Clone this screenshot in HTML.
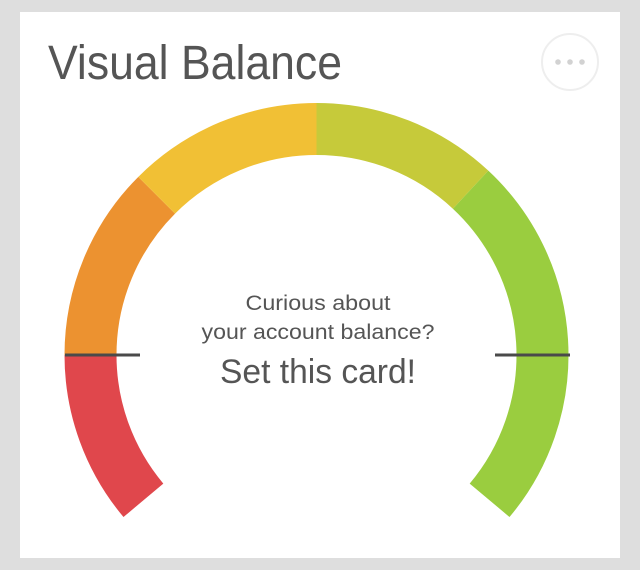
<!DOCTYPE html>
<html><head><meta charset="utf-8"><style>
html,body{margin:0;padding:0;background:#dedede;width:640px;height:570px;overflow:hidden}
svg{display:block}
</style></head><body>
<svg width="640" height="570" viewBox="0 0 640 570" xmlns="http://www.w3.org/2000/svg">
<rect x="0" y="0" width="640" height="570" fill="#dedede"/>
<rect x="20" y="12" width="600" height="546" fill="#ffffff"/>
<text x="48" y="79" font-family="Liberation Sans, sans-serif" font-size="48" fill="#555" stroke="#fff" stroke-width="1.8" paint-order="stroke" textLength="294" lengthAdjust="spacingAndGlyphs" style="paint-order:stroke">Visual Balance</text>
<circle cx="570" cy="62" r="28" fill="#fff" stroke="#eeeeee" stroke-width="2"/>
<circle cx="558" cy="62" r="2.8" fill="#d2d2d2"/>
<circle cx="570" cy="62" r="2.8" fill="#d2d2d2"/>
<circle cx="582" cy="62" r="2.8" fill="#d2d2d2"/>
<g fill="none" stroke-width="52">
<path d="M143.4 500.3 A226 226 0 0 1 90.5 355" stroke="#e0474c"/>
<path d="M90.5 355 A226 226 0 0 1 156.7 195.2" stroke="#ec9230"/>
<path d="M156.7 195.2 A226 226 0 0 1 316.5 129" stroke="#f1c035"/>
<path d="M316.5 129 A226 226 0 0 1 470.6 189.7" stroke="#c6ca3a"/>
<path d="M470.6 189.7 A226 226 0 0 1 489.6 500.3" stroke="#9acd3f"/>
</g>
<rect x="65" y="353.5" width="75" height="3" fill="#4a4a4a"/>
<rect x="495" y="353.5" width="75" height="3" fill="#4a4a4a"/>
<g font-family="Liberation Sans, sans-serif" fill="#555" text-anchor="middle" stroke="#fff" style="paint-order:stroke">
<text x="318" y="310" font-size="21" stroke-width="0.8" textLength="145" lengthAdjust="spacingAndGlyphs">Curious about</text>
<text x="318" y="339" font-size="21" stroke-width="0.8" textLength="233" lengthAdjust="spacingAndGlyphs">your account balance?</text>
<text x="318" y="383" font-size="34" stroke-width="1.4" textLength="196" lengthAdjust="spacingAndGlyphs">Set this card!</text>
</g>
</svg>
</body></html>
